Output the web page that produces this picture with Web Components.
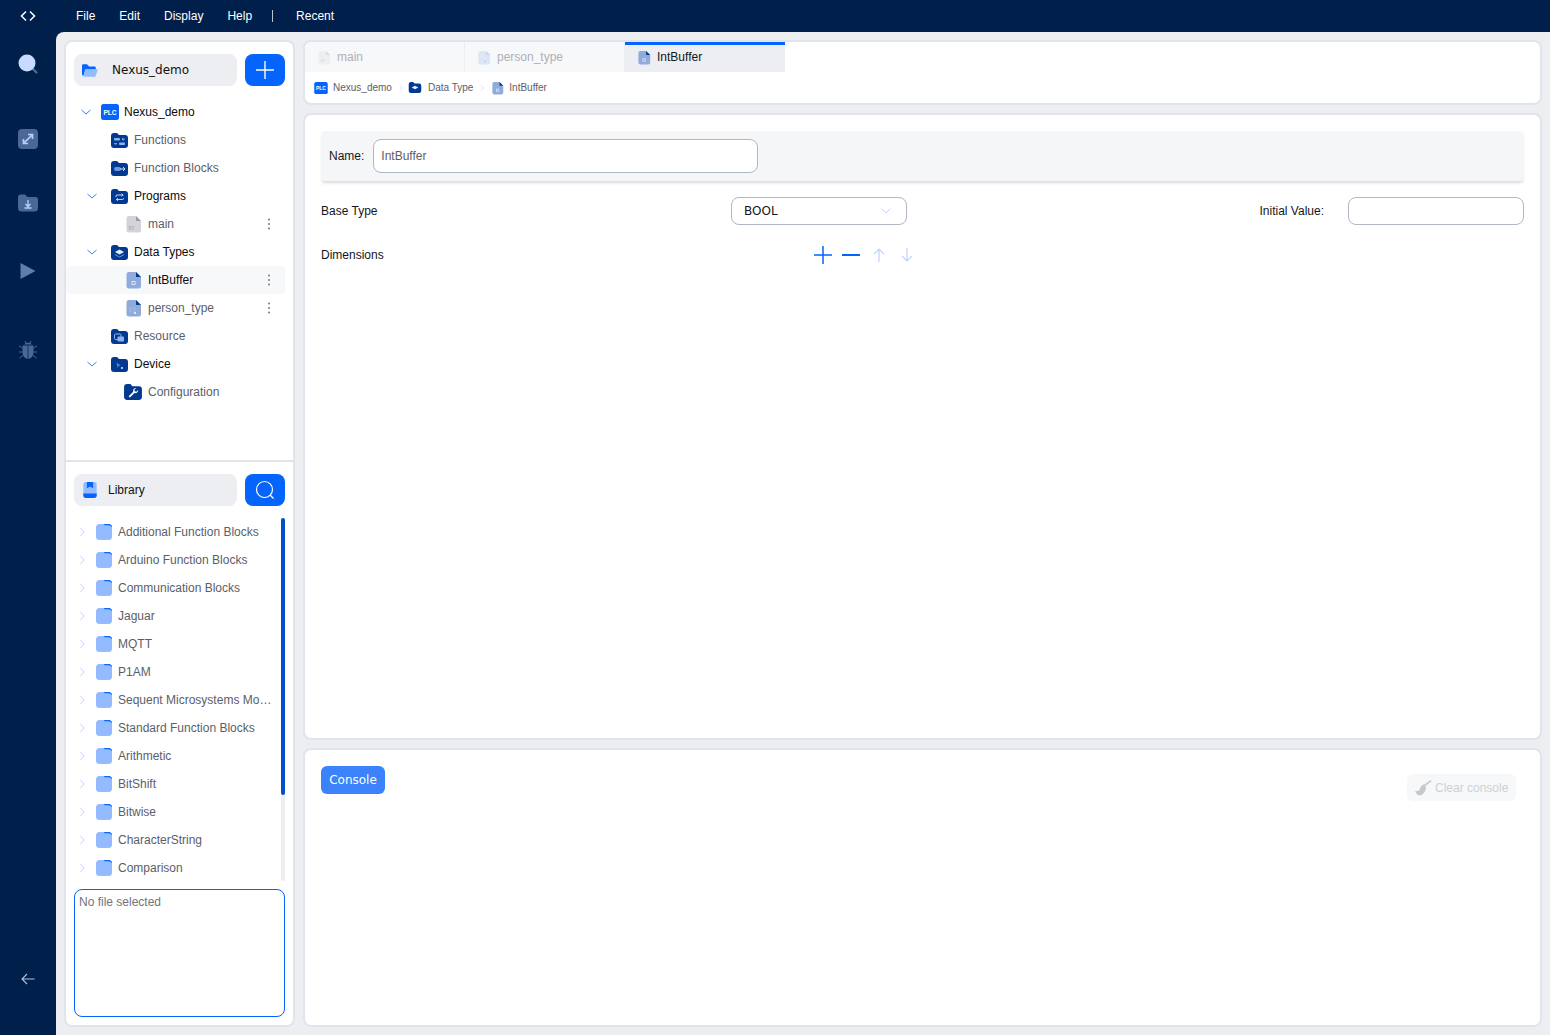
<!DOCTYPE html>
<html lang="en">
<head>
<meta charset="utf-8">
<title>Nexus_demo</title>
<style>
  html, body { margin: 0; height: 100%; overflow: hidden; }
  body { font-family: "Liberation Sans", Arial, sans-serif; font-size: 12px; background: #011f4b; }
</style>
</head>
<body>
<plc-app></plc-app>
<script>
// folder shape shared by all tree icons
const folderPath = "M1 4A3 3 0 0 1 4 1H7l2 2h6A3 3 0 0 1 18 6v7a3 3 0 0 1-3 3H4a3 3 0 0 1-3-3z";
const folder = (inner) => `<svg width="19" height="17" viewBox="0 0 19 17"><path d="${folderPath}" fill="#023a92"/>${inner}</svg>`;
const file = (body, corner, inner) => `<svg width="16" height="18" viewBox="0 0 16 18"><path d="M3 1h7l5 5v9a2.5 2.5 0 0 1-2.5 2.5H3A2.5 2.5 0 0 1 .5 15V3.5A2.5 2.5 0 0 1 3 1z" fill="${body}"/><path d="M10 1l5 5h-5z" fill="${corner}"/>${inner}</svg>`;

const icons = {
  plc: `<svg width="18" height="16" viewBox="0 0 18 16"><rect width="18" height="16" y="0" rx="2.5" fill="#0464fb"/><text x="9" y="10.6" font-size="6.6" font-weight="700" text-anchor="middle" fill="#fff" font-family="Liberation Sans">PLC</text></svg>`,
  functions: folder(`<rect x="4" y="6" width="6" height="2.4" rx="1" fill="#8fb2ee"/><path d="M12 7.2h3M13.5 6l-1.5 1.2 1.5 1.2" stroke="#a8c4f5" fill="none" stroke-width=".8"/><rect x="9" y="10.5" width="6" height="2.6" rx="1" fill="#8fb2ee"/><path d="M4 11.8h3" stroke="#a8c4f5" stroke-width="1"/>`),
  blocks: folder(`<rect x="4" y="7" width="7" height="4" rx="2" fill="#6f97de"/><path d="M10 9h5M13 7l2 2-2 2" stroke="#d5e2fa" fill="none" stroke-width="1"/>`),
  programs: folder(`<path d="M6 9V8a1 1 0 0 1 1-1h6M11.500 5.800 13.200 7l-1.700 1.200M13.500 10v.5a1 1 0 0 1-1 1H6.500M8 10.300 6.300 11.500 8 12.700" stroke="#d5e2fa" fill="none" stroke-width=".9"/>`),
  types: folder(`<path d="M9.500 5.500 14 8l-4.500 2.500L5 8z" fill="#e6eefc"/><path d="M5 10.500l4.500 2.500 4.500-2.500" stroke="#6f97de" fill="none"/>`),
  resource: folder(`<rect x="4.500" y="6" width="6.500" height="5.500" rx="1" stroke="#8fb2ee" fill="none"/><rect x="7.500" y="8.500" width="6.500" height="5" rx="1" fill="#8fb2ee"/>`),
  device: folder(`<path d="M6.500 6.500l4 3-2 .5-.7 2z" fill="#5f8ad6"/><rect x="11" y="11" width="2" height="2" fill="#a8c4f5"/>`),
  config: `<svg width="20" height="18" viewBox="0 0 19 17"><path d="${folderPath}" fill="#023a92"/><path d="M12.600 4.800a2.700 2.700 0 0 0-2.900 3.500l-4.300 4.300 1.200 1.200 4.300-4.300a2.700 2.700 0 0 0 3.500-2.900l-1.700 1.600-1.500-.4-.4-1.500z" fill="#fff"/></svg>`,
  fileSt: file("#d3d4d7", "#9b9da3", `<text x="5.500" y="14.500" font-size="4.500" font-weight="700" text-anchor="middle" fill="#a9abb0" font-family="Liberation Sans">ST</text>`),
  fileType: file("#90abdb", "#023a92", `<rect x="6" y="10.500" width="3" height="3" fill="none" stroke="#dfe8f8" stroke-width=".9"/>`),
  filePerson: file("#90abdb", "#023a92", `<rect x="4" y="9" width="5" height="4" fill="none" stroke="#a9c0e8" stroke-width=".7"/><rect x="8" y="13" width="2" height="2" fill="#dfe8f8"/>`),
  tabSt: file("#eeeff1", "#dcdde0", `<text x="5.500" y="14.500" font-size="4.500" font-weight="700" text-anchor="middle" fill="#dcdde0" font-family="Liberation Sans">ST</text>`),
  tabPerson: file("#dce6f6", "#c5d5ee", `<rect x="8" y="13" width="1.500" height="1.500" fill="#a9c0e8"/>`),
  libFolder: `<svg width="16" height="16" viewBox="0 0 16 16"><rect width="16" height="16" rx="3.500" fill="#94bbff"/><path d="M8 0h4.500A3.500 3.500 0 0 1 16 3.500C15 2 14 1.300 12 1.300H8.500z" fill="#0464fb"/></svg>`,
  down: `<svg width="12" height="12" viewBox="0 0 12 12"><path d="M1.500 4 6 8l4.500-4" stroke="#0464fb" stroke-width=".8" fill="none"/></svg>`,
  right: `<svg width="12" height="12" viewBox="0 0 12 12"><path d="M4 1.500 8 6l-4 4.500" stroke="#b5cfff" stroke-width=".9" fill="none"/></svg>`,
  dots: `<svg width="4" height="12" viewBox="0 0 4 12"><circle cx="2" cy="1.500" r="1" fill="#73767f"/><circle cx="2" cy="6" r="1" fill="#73767f"/><circle cx="2" cy="10.500" r="1" fill="#73767f"/></svg>`,
};

// top bar with the menu
const topTemplate = document.createElement("template");
topTemplate.innerHTML = `
  <style>
    :host { display: flex; align-items: center; height: 32px; background: #011f4b; color: #fff; font-size: 12px; }
    .logo { width: 56px; display: flex; justify-content: center; }
    nav { display: flex; align-items: center; gap: 24px; margin-left: 20px; }
    .sep { width: 1px; height: 12px; background: #b9c2d3; margin: 0 -1px 0 -4px; }
  </style>
  <div class="logo"><svg width="16" height="12" viewBox="0 0 16 12"><path d="M6 1.500 1.500 6 6 10.500M10 1.500 14.500 6 10 10.500" stroke="#fff" stroke-width="1.500" fill="none"/></svg></div>
  <nav><span>File</span><span>Edit</span><span>Display</span><span>Help</span><span class="sep"></span><span>Recent</span></nav>
`;
class TopBar extends HTMLElement {
  constructor() {
    super();
    this.attachShadow({ mode: "open" }).appendChild(topTemplate.content.cloneNode(true));
  }
}
customElements.define("top-bar", TopBar);

// left rail with the activity icons
const railTemplate = document.createElement("template");
railTemplate.innerHTML = `
  <style>
    :host { display: flex; flex-direction: column; align-items: center; width: 56px; flex: none; background: #011f4b; }
    svg { display: block; flex: none; }
    .back { margin-top: auto; margin-bottom: 50px; }
  </style>
  <svg style="margin-top:21px" width="22" height="22" viewBox="0 0 22 22"><path d="M15 15l4.500 4.500" stroke="#4f6c9a" stroke-width="2.200" stroke-linecap="round"/><circle cx="10" cy="10" r="8.500" fill="#c6dbff"/></svg>
  <svg style="margin-top:54px" width="20" height="20" viewBox="0 0 20 20"><rect width="20" height="20" rx="4" fill="#4a6796"/><path d="M6.500 13.500l7-7M10 5.500h4.500V10M5.500 10v4.500H10" stroke="#b9d1fa" stroke-width="1.700" fill="none"/></svg>
  <svg style="margin-top:45px" width="20" height="18" viewBox="0 0 20 18"><path d="M0 3a2.500 2.500 0 0 1 2.500-2.500H7L9.500 3h8A2.500 2.500 0 0 1 20 5.500V14a3.500 3.500 0 0 1-3.500 3.500h-13A3.500 3.500 0 0 1 0 14z" fill="#4a6796"/><path d="M10 6v6M7.500 10l2.500 2.500 2.500-2.500M6.500 14h7" stroke="#b9d1fa" stroke-width="1.300" fill="none"/></svg>
  <svg style="margin-top:50px" width="16" height="18" viewBox="0 0 16 18"><path d="M.500 1 15.500 9 .500 17z" fill="#5f7eae"/></svg>
  <svg style="margin-top:60px" width="20" height="20" viewBox="0 0 20 20"><path d="M6 4.500a4.500 3.500 0 0 1 8 0zM4.500 5.500h11v7a5.500 6.500 0 0 1-11 0z" fill="#4a6796"/><path d="M7 1l1 2.500M13 1l-1 2.500M4.500 8 1 6M15.500 8 19 6M4.500 12H1M15.500 12H19M5 15.500 1.500 18M15 15.500 18.500 18" stroke="#4a6796" stroke-width="1"/><path d="M10 5.500V19" stroke="#011f4b" stroke-width=".7"/></svg>
  <svg class="back" width="14" height="12" viewBox="0 0 14 12"><path d="M13.500 6H1M6 1 1 6l5 5" stroke="#b4c2da" stroke-width="1.100" fill="none"/></svg>
`;
class SideRail extends HTMLElement {
  constructor() {
    super();
    this.attachShadow({ mode: "open" }).appendChild(railTemplate.content.cloneNode(true));
  }
}
customElements.define("side-rail", SideRail);

// one row of the project tree
const treeTemplate = document.createElement("template");
treeTemplate.innerHTML = `
  <style>
    :host { display: flex; align-items: center; height: 28px; color: #5b5e69; }
    :host([strong]) { color: #0b0c10; }
    :host([active]) { background: #f7f8fa; color: #0b0c10; border-radius: 3px; }
    .lead { flex: none; display: flex; align-items: center; height: 12px; }
    .icon { flex: none; display: flex; align-items: center; }
    .label { flex: 1; }
    .menu { flex: none; display: none; width: 4px; margin-right: 14px; }
    :host([menu]) .menu { display: flex; }
    svg { display: block; }
  </style>
  <span class="lead"></span><span class="icon"></span><span class="label"><slot></slot></span><span class="menu">${icons.dots}</span>
`;
class TreeRow extends HTMLElement {
  constructor() {
    super();
    this.attachShadow({ mode: "open" }).appendChild(treeTemplate.content.cloneNode(true));
  }
  connectedCallback() {
    const root = this.shadowRoot;
    const lead = root.querySelector(".lead");
    const icon = root.querySelector(".icon");
    lead.style.width = this.getAttribute("x") + "px";
    if (this.hasAttribute("caret")) {
      lead.innerHTML = icons.down;
      lead.firstChild.style.marginLeft = this.getAttribute("caret") + "px";
    }
    icon.innerHTML = icons[this.getAttribute("icon")];
    icon.style.marginRight = (this.getAttribute("gap") || 5) + "px";
  }
}
customElements.define("tree-row", TreeRow);

// project tree section
const projectTemplate = document.createElement("template");
projectTemplate.innerHTML = `
  <style>
    :host { display: block; height: 420px; flex: none; box-sizing: border-box; padding: 12px 8px 0 0; border-bottom: 2px solid #e1e4ea; }
    .head { display: flex; gap: 8px; margin: 0 0 12px 8px; }
    .title { flex: 1; height: 32px; display: flex; align-items: center; background: #eceef2; border-radius: 8px; padding-left: 8px; font: 12px "DejaVu Sans", sans-serif; color: #111; }
    .title svg { margin-right: 14px; }
    .add { width: 40px; height: 32px; border-radius: 8px; background: #0464fb; display: flex; align-items: center; justify-content: center; }
  </style>
  <div class="head">
    <div class="title"><svg width="16" height="15" viewBox="0 0 18 16"><path d="M0 2.500A1.500 1.500 0 0 1 1.500 1h4L8 3.500h6A1.500 1.500 0 0 1 15.500 5v2H4L1.500 14 0 13z" fill="#0464fb"/><path d="M3.500 6.500H18l-2.500 7.500a1.500 1.500 0 0 1-1.500 1H1.500z" fill="#94bbff"/></svg>Nexus_demo</div>
    <div class="add"><svg width="18" height="18" viewBox="0 0 18 18"><path d="M9 0v18M0 9h18" stroke="#fff" stroke-width="1.400"/></svg></div>
  </div>
  <tree-row x="35" caret="14" icon="plc" strong>Nexus_demo</tree-row>
  <tree-row x="44" icon="functions">Functions</tree-row>
  <tree-row x="44" icon="blocks">Function Blocks</tree-row>
  <tree-row x="44" caret="20" icon="programs" strong>Programs</tree-row>
  <tree-row x="60" icon="fileSt" gap="6" menu>main</tree-row>
  <tree-row x="44" caret="20" icon="types" strong>Data Types</tree-row>
  <tree-row x="60" icon="fileType" gap="6" menu active>IntBuffer</tree-row>
  <tree-row x="60" icon="filePerson" gap="6" menu>person_type</tree-row>
  <tree-row x="44" icon="resource">Resource</tree-row>
  <tree-row x="44" caret="20" icon="device" strong>Device</tree-row>
  <tree-row x="57" icon="config" gap="5">Configuration</tree-row>
`;
class ProjectTree extends HTMLElement {
  constructor() {
    super();
    this.attachShadow({ mode: "open" }).appendChild(projectTemplate.content.cloneNode(true));
  }
}
customElements.define("project-tree", ProjectTree);

// library list with its header and file note
const libNames = ["Additional Function Blocks", "Arduino Function Blocks", "Communication Blocks", "Jaguar", "MQTT", "P1AM",
  "Sequent Microsystems Modules", "Standard Function Blocks", "Arithmetic", "BitShift", "Bitwise", "CharacterString", "Comparison"];
const libTemplate = document.createElement("template");
libTemplate.innerHTML = `
  <style>
    :host { display: flex; flex-direction: column; flex: 1; min-height: 0; padding: 12px 8px 8px; }
    .head { display: flex; gap: 8px; margin-bottom: 12px; }
    .title { flex: 1; height: 32px; display: flex; align-items: center; background: #eceef2; border-radius: 8px; padding-left: 9px; color: #111; }
    .title svg { margin-right: 11px; }
    .find { width: 40px; height: 32px; border-radius: 8px; background: #0464fb; display: flex; align-items: center; justify-content: center; }
    .body { display: flex; height: 363px; margin-bottom: 8px; }
    .list { width: 198px; flex: none; overflow: hidden; }
    .row { display: flex; align-items: center; height: 28px; color: #5b5e69; }
    .row .c { width: 22px; display: flex; padding-left: 2px; box-sizing: border-box; flex: none; }
    .row .f { display: flex; margin-right: 6px; flex: none; }
    .row .t { white-space: nowrap; overflow: hidden; text-overflow: ellipsis; width: 154px; }
    .bar { width: 4px; margin-left: 9px; background: #eceef2; border-radius: 2px; }
    .thumb { height: 277px; background: #0350c8; border-radius: 2px; }
    .note { height: 128px; box-sizing: border-box; border: 1px solid #0464fb; border-radius: 8px; padding: 5px 4px; color: #71747f; }
  </style>
  <div class="head">
    <div class="title"><svg width="14" height="16" viewBox="0 0 15 18"><path d="M3 0h9.500A2.500 2.500 0 0 1 15 2.500V15a3 3 0 0 1-3 3H3a3 3 0 0 1-3-3V3a3 3 0 0 1 3-3z" fill="#94bbff"/><path d="M4 0h7v7L7.500 5 4 7z" fill="#0464fb"/><path d="M0 13h15v2a3 3 0 0 1-3 3H3a3 3 0 0 1-3-3z" fill="#0464fb"/></svg>Library</div>
    <div class="find"><svg width="20" height="20" viewBox="0 0 20 20"><circle cx="9.500" cy="9.500" r="8" stroke="#fff" stroke-width="1.200" fill="none"/><path d="M15 15l3.500 3.500" stroke="#fff" stroke-width="1.200"/></svg></div>
  </div>
  <div class="body">
    <div class="list"></div>
    <div class="bar"><div class="thumb"></div></div>
  </div>
  <div class="note">No file selected</div>
`;
class LibraryPanel extends HTMLElement {
  constructor() {
    super();
    this.attachShadow({ mode: "open" }).appendChild(libTemplate.content.cloneNode(true));
    this.shadowRoot.querySelector(".list").innerHTML = libNames.map((name) =>
      `<div class="row"><span class="c">${icons.right}</span><span class="f">${icons.libFolder}</span><span class="t">${name}</span></div>`).join("");
  }
}
customElements.define("library-panel", LibraryPanel);

// tabs and breadcrumb
const tabsTemplate = document.createElement("template");
tabsTemplate.innerHTML = `
  <style>
    :host { display: block; height: 65px; box-sizing: border-box; background: #fff; border: 2px solid #e1e4ea; border-radius: 8px; overflow: hidden; }
    .tabs { display: flex; height: 30px; }
    .tab { width: 160px; box-sizing: border-box; display: flex; align-items: center; gap: 6px; padding: 0 0 0 13px; background: #f7f8fa; color: #aeb0b7; border-right: 1px solid #eceef2; }
    .tab.on { background: #eceef2; color: #15161a; border-top: 3px solid #0464fb; border-right: 0; padding-bottom: 3px; }
    .tab svg { width: 13px; height: 15px; }
    .crumbs { display: flex; align-items: center; height: 31px; padding-left: 9px; font-size: 10px; color: #5b5e69; }
    .crumbs svg { flex: none; }
    .crumbs .i { display: flex; margin-right: 5px; }
    .crumbs .s { display: flex; margin: 0 5px; }
  </style>
  <div class="tabs">
    <div class="tab">${icons.tabSt}main</div>
    <div class="tab">${icons.tabPerson}person_type</div>
    <div class="tab on">${icons.fileType}IntBuffer</div>
  </div>
  <div class="crumbs">
    <span class="i"><svg width="14" height="12" viewBox="0 0 18 16"><rect width="18" height="16" rx="2.500" fill="#0464fb"/><text x="9" y="10.600" font-size="6.600" font-weight="700" text-anchor="middle" fill="#fff" font-family="Liberation Sans">PLC</text></svg></span>Nexus_demo
    <span class="s" style="margin-right:3px"><svg width="8" height="8" viewBox="0 0 12 12"><path d="M4 1.500 8 6l-4 4.500" stroke="#d4dff3" stroke-width="1.200" fill="none"/></svg></span>
    <span class="i" style="margin-right:6px"><svg width="14" height="13" viewBox="0 0 19 17"><path d="${folderPath}" fill="#023a92"/><path d="M9.500 6 14 8.500 9.500 11 5 8.500z" fill="#e6eefc"/></svg></span>Data Type
    <span class="s" style="margin-right:6px"><svg width="8" height="8" viewBox="0 0 12 12"><path d="M4 1.500 8 6l-4 4.500" stroke="#d4dff3" stroke-width="1.200" fill="none"/></svg></span>
    <span class="i"><svg width="12" height="14" viewBox="0 0 16 18"><path d="M3 1h7l5 5v9a2.500 2.500 0 0 1-2.500 2.500H3A2.500 2.500 0 0 1 .5 15V3.500A2.500 2.500 0 0 1 3 1z" fill="#90abdb"/><path d="M10 1l5 5h-5z" fill="#023a92"/><rect x="6" y="10.500" width="3" height="3" fill="none" stroke="#dfe8f8" stroke-width=".9"/></svg></span>IntBuffer
  </div>
`;
class EditorTabs extends HTMLElement {
  constructor() {
    super();
    this.attachShadow({ mode: "open" }).appendChild(tabsTemplate.content.cloneNode(true));
  }
}
customElements.define("editor-tabs", EditorTabs);

// data type form
const formTemplate = document.createElement("template");
formTemplate.innerHTML = `
  <style>
    :host { display: block; height: 627px; box-sizing: border-box; background: #fff; border: 2px solid #e1e4ea; border-radius: 8px; padding: 16px; color: #15161a; }
    .name { display: flex; align-items: center; gap: 9px; height: 50px; box-sizing: border-box; padding: 0 8px; background: #f5f6f8; border-radius: 4px; box-shadow: 0 3px 3px -1px rgba(20,30,60,.16); margin-bottom: 16px; }
    .box { box-sizing: border-box; background: #fff; border: 1px solid #b0b6c6; border-radius: 8px; display: flex; align-items: center; }
    .input { width: 385px; height: 34px; padding-left: 7px; color: #5b5e69; }
    .row { display: flex; justify-content: space-between; align-items: center; }
    .left { display: flex; justify-content: space-between; align-items: center; width: 586px; }
    .select { width: 176px; height: 28px; padding: 0 15px 0 12px; justify-content: space-between; font: 12px "DejaVu Sans", sans-serif; }
    .right { display: flex; align-items: center; gap: 24px; }
    .value { width: 176px; height: 28px; }
    .dims { display: flex; justify-content: space-between; align-items: center; width: 596px; margin-top: 20px; }
    .tools { display: flex; gap: 8px; }
    .tools svg { display: block; }
  </style>
  <div class="name"><span>Name:</span><div class="box input">IntBuffer</div></div>
  <div class="row">
    <div class="left"><span>Base Type</span>
      <div class="box select">BOOL<svg width="10" height="6" viewBox="0 0 10 6"><path d="M.5 .5 5 5 9.500 .5" stroke="#c2d6f7" fill="none"/></svg></div>
    </div>
    <div class="right"><span>Initial Value:</span><div class="box value"></div></div>
  </div>
  <div class="dims"><span>Dimensions</span>
    <div class="tools">
      <svg width="20" height="20" viewBox="0 0 20 20"><path d="M10 1v18M1 10h18" stroke="#0464fb" stroke-width="1.500"/></svg>
      <svg width="20" height="20" viewBox="0 0 20 20"><path d="M1 10h18" stroke="#0464fb" stroke-width="2"/></svg>
      <svg width="20" height="20" viewBox="0 0 20 20"><path d="M10 17V4M5 9l5-5 5 5" stroke="#bdd4fb" stroke-width="1.200" fill="none"/></svg>
      <svg width="20" height="20" viewBox="0 0 20 20"><path d="M10 3v13M5 11l5 5 5-5" stroke="#bdd4fb" stroke-width="1.200" fill="none"/></svg>
    </div>
  </div>
`;
class TypeForm extends HTMLElement {
  constructor() {
    super();
    this.attachShadow({ mode: "open" }).appendChild(formTemplate.content.cloneNode(true));
  }
}
customElements.define("type-form", TypeForm);

// console panel
const consoleTemplate = document.createElement("template");
consoleTemplate.innerHTML = `
  <style>
    :host { display: flex; align-items: flex-start; justify-content: space-between; flex: 1; box-sizing: border-box; background: #fff; border: 2px solid #e1e4ea; border-radius: 8px; padding: 16px 24px 0 16px; }
    .tab { height: 28px; width: 64px; display: flex; align-items: center; justify-content: center; background: #3c82fb; color: #fff; border-radius: 6px; font: 12px "DejaVu Sans", sans-serif; }
    .clear { height: 27px; width: 109px; margin-top: 8px; box-sizing: border-box; display: flex; align-items: center; gap: 3px; padding-left: 8px; background: #f7f8fa; border-radius: 6px; color: #ced0d6; }
  </style>
  <div class="tab">Console</div>
  <div class="clear"><svg width="17" height="16" viewBox="0 0 17 16"><path d="M9 6 16 .5" stroke="#c6c8ce" stroke-width="1.600"/><path d="M8 4.500c1.500.5 3 2 3 3.500-.5 4-3 6.500-6 7.500-2 0-3.500-1.500-5-4.500 2 .5 3.500 0 4.500-1 .5-2 1.500-4 3.500-5.500z" fill="#c6c8ce"/></svg>Clear console</div>
`;
class ConsolePanel extends HTMLElement {
  constructor() {
    super();
    this.attachShadow({ mode: "open" }).appendChild(consoleTemplate.content.cloneNode(true));
  }
}
customElements.define("console-panel", ConsolePanel);

// whole page
const appTemplate = document.createElement("template");
appTemplate.innerHTML = `
  <style>
    :host { display: flex; flex-direction: column; height: 100vh; }
    .under { flex: 1; display: flex; min-height: 0; }
    .work { flex: 1; display: flex; gap: 8px; padding: 8px; background: #eceef2; border-radius: 8px 0 0 0; min-width: 0; }
    .side { width: 231px; flex: none; box-sizing: border-box; display: flex; flex-direction: column; background: #fff; border: 2px solid #e1e4ea; border-radius: 8px; }
    .main { flex: 1; display: flex; flex-direction: column; gap: 8px; min-width: 0; }
  </style>
  <top-bar></top-bar>
  <div class="under">
    <side-rail></side-rail>
    <div class="work">
      <div class="side"><project-tree></project-tree><library-panel></library-panel></div>
      <div class="main"><editor-tabs></editor-tabs><type-form></type-form><console-panel></console-panel></div>
    </div>
  </div>
`;
class PlcApp extends HTMLElement {
  constructor() {
    super();
    this.attachShadow({ mode: "open" }).appendChild(appTemplate.content.cloneNode(true));
  }
}
customElements.define("plc-app", PlcApp);
</script>
</body>
</html>
